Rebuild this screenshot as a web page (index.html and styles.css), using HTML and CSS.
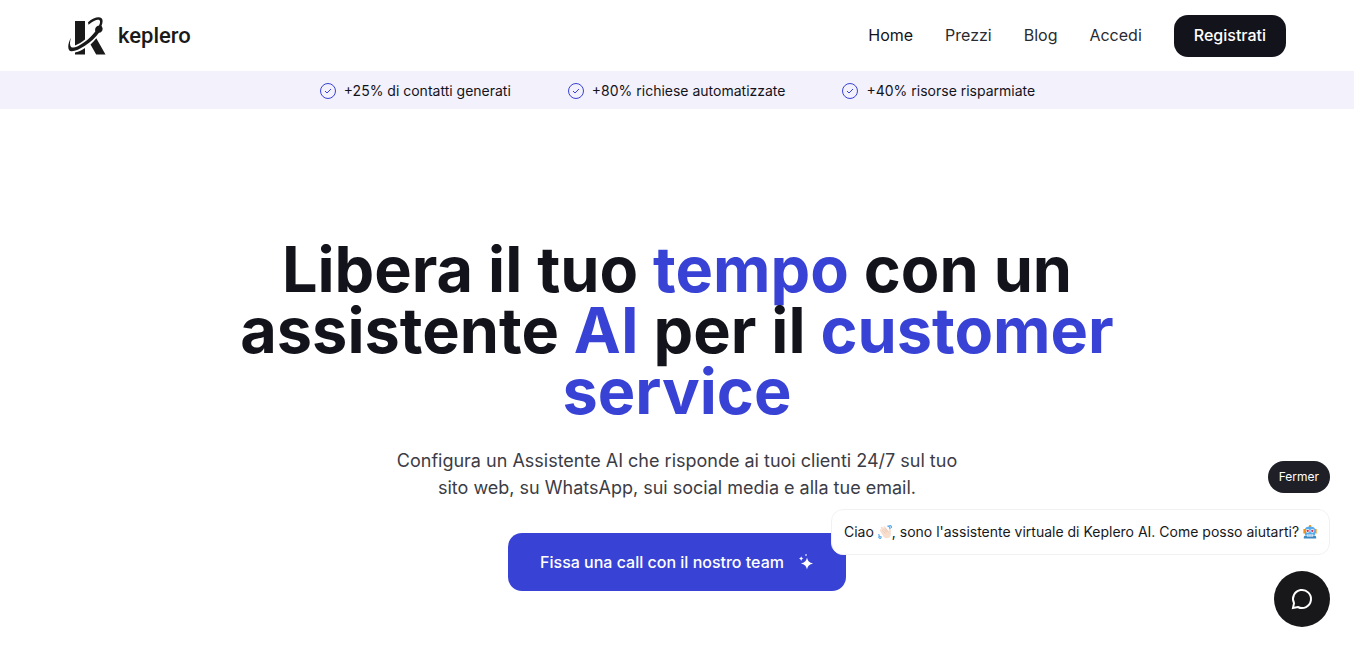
FILE: index.html
```
<!DOCTYPE html>
<html lang="it">
<head>
    <meta charset="UTF-8">
    <meta name="viewport" content="width=device-width, initial-scale=1.0">
    <title>Keplero AI</title>
    <link rel="stylesheet" href="styles.css">
</head>
<body>
    <header class="header">
        <a class="logo" href="#">
            <svg class="logo-mark" viewBox="0 0 38 38" aria-hidden="true">
                <path d="M7 4h10v18.500c-3 2.500-6.500 4.500-10 6z"/>
                <path d="M7 37.500v-2c4-1 7-2.500 10-4.500v6.500z"/>
                <path d="M22.500 27.500c2.200-2 4-4 5.800-6.300l9.200 16.300h-9.300z"/>
                <path d="M20 5.200C25 .8 31-.8 33.500 1.200c1.600 1.400 1.300 4.500 0 7.600l1 2.200c.5 2.500-1 4.500-3.500 4.800C24 25.500 10 34.500 3.500 34.200-.8 33.800-.7 27.500 3 20.500c-1.500 5.500-1.500 9.500 1.500 10 5 .6 16.500-7.500 22.800-16-.8-3 .7-5.500 3.700-6 1.200-2.500 1.500-4.500.5-5.300-1.600-1.300-5.500 0-11 4.500z"/>
            </svg>
            <span class="logo-name">keplero</span>
        </a>
        <nav class="nav">
            <a class="active" href="#">Home</a>
            <a href="#">Prezzi</a>
            <a href="#">Blog</a>
            <a href="#">Accedi</a>
            <a class="signup" href="#">Registrati</a>
        </nav>
    </header>

    <ul class="stats">
        <li>
            <svg viewBox="0 0 18 18" aria-hidden="true"><circle cx="9" cy="9" r="7.500"/><path d="M6 9l2 2 4-4"/></svg>
            +25% di contatti generati
        </li>
        <li>
            <svg viewBox="0 0 18 18" aria-hidden="true"><circle cx="9" cy="9" r="7.500"/><path d="M6 9l2 2 4-4"/></svg>
            +80% richiese automatizzate
        </li>
        <li>
            <svg viewBox="0 0 18 18" aria-hidden="true"><circle cx="9" cy="9" r="7.500"/><path d="M6 9l2 2 4-4"/></svg>
            +40% risorse risparmiate
        </li>
    </ul>

    <main class="hero">
        <h1>Libera il tuo <em>tempo</em> con un assistente <em>AI</em> per il <em>customer service</em></h1>
        <p>Configura un Assistente AI che risponde ai tuoi clienti 24/7 sul tuo sito web, su WhatsApp, sui social media e alla tue email.</p>
        <a class="cta" href="#">
            Fissa una call con il nostro team
            <svg viewBox="0 0 16 16" aria-hidden="true">
                <path d="M9 3.500c.8 3.500 2.300 5 6 6-3.700 1-5.200 2.500-6 6-.8-3.500-2.300-5-6-6 3.700-1 5.200-2.500 6-6z"/>
                <path d="M3.200 2.200c.4 1.400 1 2 2.400 2.400-1.400.4-2 1-2.400 2.400-.4-1.400-1-2-2.400-2.400 1.400-.4 2-1 2.400-2.400z"/>
                <circle cx="8" cy="1" r="1" opacity=".7"/>
            </svg>
        </a>
    </main>

    <div class="chat">
        <button class="chat-close" type="button">Fermer</button>
        <div class="chat-message">
            Ciao <svg class="emoji" viewBox="0 0 36 36" role="img" aria-label="👋🏻">
                <path d="M5 15c-2-3 1-5 3-3l6 6-7-10c-1-3 2-5 4-3l8 9-5-8c-1-3 2-4 4-2l10 13 0-6c0-4 5-4 5 0l0 13c0 9-11 14-18 7z" fill="#f7dece"/>
                <path d="M9 12l10 10M13 9l10 10M18 8l9 11" fill="none" stroke="#e0aa94"/>
                <path d="M24 3c4 0 7 3 7 7M27 0c5 0 8 4 8 8M2 23c0 5 4 8 8 8M1 29c1 4 3 6 7 6" fill="none" stroke="#5dadec" stroke-width="3"/>
            </svg>, sono l'assistente virtuale di Keplero AI. Come posso aiutarti? <svg class="emoji" viewBox="0 0 36 36" role="img" aria-label="🤖">
                <circle cx="18" cy="3" r="3" fill="#f4900c"/>
                <path d="M1 10h5v12H1zM30 10h5v12h-5z" fill="#f4900c"/>
                <path d="M5 12c0-5 5-8 13-8s13 3 13 8v14H5z" fill="#55acee"/>
                <path d="M2 33c0-4 2-6 5-6h22c3 0 5 2 5 6v2H2z" fill="#3b88c3"/>
                <circle cx="12" cy="15" r="5" fill="#fff"/>
                <circle cx="24" cy="15" r="5" fill="#fff"/>
                <circle cx="12" cy="15" r="3" fill="#dd2e44"/>
                <circle cx="24" cy="15" r="3" fill="#dd2e44"/>
                <path d="M10 24h16v6H10z" fill="#e1e8ed"/>
                <path d="M14 24v6M18 24v6M22 24v6" stroke="#55acee"/>
            </svg>
        </div>
        <button class="chat-open" type="button" aria-label="Chat">
            <svg viewBox="0 0 24 24" aria-hidden="true"><path d="M3 21v-9a9 9 0 1 1 9 9z" stroke="none"/><path d="M7.900 20A9 9 0 1 0 4 16.100L3 21z"/></svg>
        </button>
    </div>
</body>
</html>
```
FILE: styles.css
```
* {
    box-sizing: border-box;
}
body {
    margin: 0;
    padding-right: 12px;
    font-family: Inter, "Liberation Sans", sans-serif;
    font-size: 16px;
    color: #13131b;
    background-color: #fff;
}
a {
    color: inherit;
    text-decoration: none;
}
button {
    font: inherit;
    border: 0;
    cursor: pointer;
}
.header {
    display: flex;
    justify-content: space-between;
    align-items: center;
    padding: 15px 68px 14px;
}
.logo {
    display: flex;
    align-items: center;
    gap: 12px;
    color: #1a1a1a;
}
.logo-mark {
    width: 38px;
    height: 38px;
    fill: currentColor;
}
.logo-name {
    padding-bottom: 2px;
    font: 500 22px Roboto, sans-serif;
}
.nav {
    display: flex;
    align-items: center;
    gap: 32px;
}
.nav a {
    padding-bottom: 2px;
    color: #2a2a31;
}
.nav .active {
    color: #13131b;
}
.nav .signup {
    padding: 0 20px 2px;
    line-height: 40px;
    font-weight: 500;
    color: #fff;
    background: #13131b;
    border-radius: 14px;
}
.stats {
    display: flex;
    justify-content: center;
    gap: 56px;
    margin: 0;
    padding: 10px 20px 8px;
    list-style: none;
    font-size: 14px;
    line-height: 20px;
    background: #f3f1fc;
}
.stats li {
    display: flex;
    align-items: center;
    gap: 7px;
}
.stats svg {
    width: 18px;
    height: 18px;
    fill: none;
    stroke: #3843d5;
}
.hero {
    display: flex;
    flex-direction: column;
    align-items: center;
    padding: 130px 20px 60px;
    text-align: center;
}
.hero h1 {
    max-width: 896px;
    margin: 0;
    font-size: 63px;
    line-height: 61px;
    font-weight: 700;
}
.hero em {
    font-style: normal;
    color: #3843d5;
}
.hero p {
    max-width: 576px;
    margin: 25px 0 32px;
    font-size: 18px;
    line-height: 27px;
    color: #3c3c45;
}
.cta {
    display: flex;
    align-items: center;
    gap: 14px;
    padding: 0 32px;
    line-height: 58px;
    font-weight: 500;
    color: #fff;
    background: #3843d5;
    border-radius: 14px;
}
.cta svg {
    width: 16px;
    height: 16px;
    fill: #fff;
}
.chat {
    position: fixed;
    right: 36px;
    bottom: 24px;
    display: flex;
    flex-direction: column;
    align-items: flex-end;
    gap: 16px;
}
.chat-close {
    padding: 0 11px;
    font-size: 12px;
    line-height: 32px;
    color: #fff;
    background: #1f1f27;
    border-radius: 16px;
}
.chat-message {
    padding: 12px;
    font-size: 14px;
    line-height: 20px;
    color: #18181b;
    background: #fff;
    border: 1px solid #f1f1f3;
    border-radius: 12px;
}
.emoji {
    width: 14px;
    height: 14px;
    vertical-align: -2px;
}
.chat-open {
    display: flex;
    justify-content: center;
    align-items: center;
    width: 56px;
    height: 56px;
    background: #18181b;
    border-radius: 50%;
}
.chat-open svg {
    width: 24px;
    height: 24px;
    fill: none;
    stroke: #fff;
    stroke-width: 2;
}
```
